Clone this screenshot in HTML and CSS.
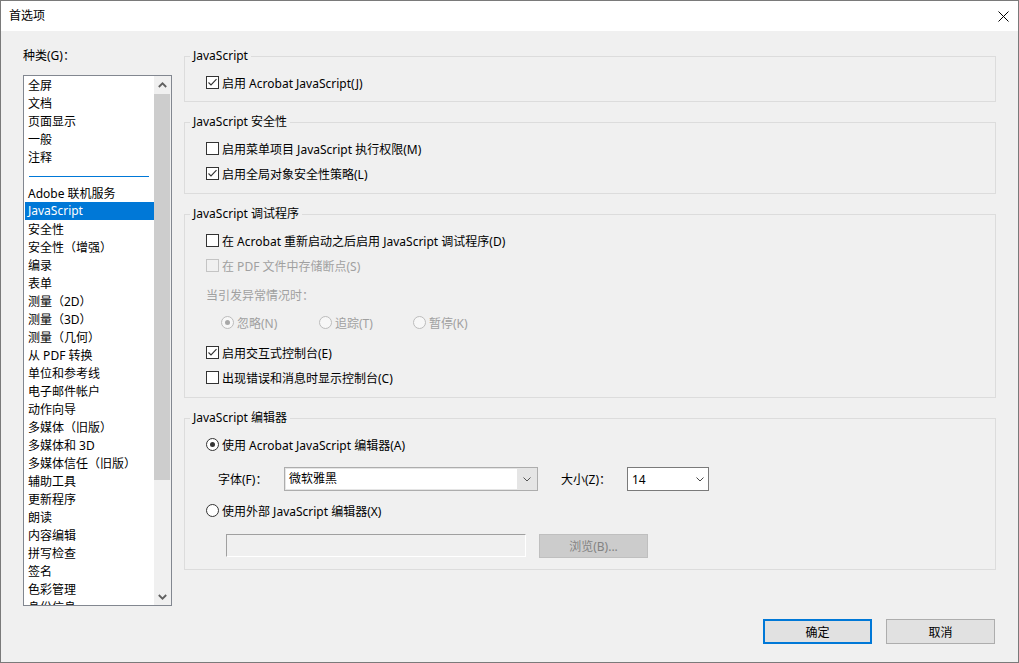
FILE: index.html
```html
<!DOCTYPE html>
<html lang="zh-CN">
<head>
<meta charset="utf-8">
<title>首选项</title>
<link rel="stylesheet" href="styles.css">
</head>
<body>
<div class="window">
  <div class="titlebar">
    <span class="title">首选项</span>
    <span class="close"><svg width="11" height="11" viewBox="0 0 11 11"><path d="M0.5 0.5 L10.5 10.5 M10.5 0.5 L0.5 10.5" stroke="#000" stroke-width="1" fill="none"/></svg></span>
  </div>
  <div class="body">
    <div class="content">
      <div class="left">
        <div class="cat-label">种类(G)：</div>
        <div class="listbox">
          <ul class="items">
            <li>全屏</li>
            <li>文档</li>
            <li>页面显示</li>
            <li>一般</li>
            <li>注释</li>
            <li class="sep"><span class="sep-line"></span></li>
            <li>Adobe 联机服务</li>
            <li class="sel">JavaScript</li>
            <li>安全性</li>
            <li>安全性（增强）</li>
            <li>编录</li>
            <li>表单</li>
            <li>测量（2D）</li>
            <li>测量（3D）</li>
            <li>测量（几何）</li>
            <li>从 PDF 转换</li>
            <li>单位和参考线</li>
            <li>电子邮件帐户</li>
            <li>动作向导</li>
            <li>多媒体（旧版）</li>
            <li>多媒体和 3D</li>
            <li>多媒体信任（旧版）</li>
            <li>辅助工具</li>
            <li>更新程序</li>
            <li>朗读</li>
            <li>内容编辑</li>
            <li>拼写检查</li>
            <li>签名</li>
            <li>色彩管理</li>
            <li>身份信息</li>
          </ul>
          <div class="scrollbar">
            <div class="sb-btn"><svg width="9" height="6" viewBox="0 0 9 6"><polyline points="0.8,5 4.5,1.3 8.2,5" fill="none" stroke="#606060" stroke-width="1.8"/></svg></div>
            <div class="sb-track"><div class="sb-thumb"></div></div>
            <div class="sb-btn"><svg width="9" height="6" viewBox="0 0 9 6"><polyline points="0.8,1 4.5,4.7 8.2,1" fill="none" stroke="#606060" stroke-width="1.8"/></svg></div>
          </div>
        </div>
      </div>

      <div class="right">
        <fieldset class="group">
          <legend>JavaScript</legend>
          <div class="gbody">
            <div class="row"><span class="cb"><svg width="11" height="11" viewBox="0 0 11 11"><polyline points="1.5,5.5 4,8 9.5,2.2" fill="none" stroke="#333" stroke-width="1.1"/></svg></span>启用 Acrobat JavaScript(J)</div>
          </div>
        </fieldset>

        <fieldset class="group">
          <legend>JavaScript 安全性</legend>
          <div class="gbody">
            <div class="row"><span class="cb"></span>启用菜单项目 JavaScript 执行权限(M)</div>
            <div class="row"><span class="cb"><svg width="11" height="11" viewBox="0 0 11 11"><polyline points="1.5,5.5 4,8 9.5,2.2" fill="none" stroke="#333" stroke-width="1.1"/></svg></span>启用全局对象安全性策略(L)</div>
          </div>
        </fieldset>

        <fieldset class="group">
          <legend>JavaScript 调试程序</legend>
          <div class="gbody gbody-debug">
            <div class="row"><span class="cb"></span>在 Acrobat 重新启动之后启用 JavaScript 调试程序(D)</div>
            <div class="row dis-text"><span class="cb cb-dis"></span>在 PDF 文件中存储断点(S)</div>
            <div class="row dis-text exc-label">当引发异常情况时：</div>
            <div class="row radios dis-text">
              <span class="radio-item ri-1"><span class="rd rd-dis rd-on"></span>忽略(N)</span>
              <span class="radio-item ri-2"><span class="rd rd-dis"></span>追踪(T)</span>
              <span class="radio-item"><span class="rd rd-dis"></span>暂停(K)</span>
            </div>
            <div class="row after-radios"><span class="cb"><svg width="11" height="11" viewBox="0 0 11 11"><polyline points="1.5,5.5 4,8 9.5,2.2" fill="none" stroke="#333" stroke-width="1.1"/></svg></span>启用交互式控制台(E)</div>
            <div class="row"><span class="cb"></span>出现错误和消息时显示控制台(C)</div>
          </div>
        </fieldset>

        <fieldset class="group">
          <legend>JavaScript 编辑器</legend>
          <div class="gbody gbody-editor">
            <div class="row"><span class="rd rd-on"></span>使用 Acrobat JavaScript 编辑器(A)</div>
            <div class="fontrow">
              <span class="flabel">字体(F)：</span>
              <span class="combo">
                <span class="combo-val">微软雅黑</span>
                <span class="combo-arrow"><svg width="8" height="5" viewBox="0 0 8 5"><polyline points="0.5,0.5 4,4 7.5,0.5" fill="none" stroke="#555" stroke-width="1"/></svg></span>
              </span>
              <span class="flabel">大小(Z)：</span>
              <span class="combo2">
                <span>14</span>
                <svg width="8" height="5" viewBox="0 0 8 5"><polyline points="0.5,0.5 4,4 7.5,0.5" fill="none" stroke="#444" stroke-width="1"/></svg>
              </span>
            </div>
            <div class="row ext-row"><span class="rd"></span>使用外部 JavaScript 编辑器(X)</div>
            <div class="fieldrow">
              <span class="tfield"></span>
              <span class="browse">浏览(B)...</span>
            </div>
          </div>
        </fieldset>
      </div>
    </div>

    <div class="footer">
      <span class="btn btn-primary">确定</span>
      <span class="btn">取消</span>
    </div>
  </div>
</div>
</body>
</html>
```

FILE: styles.css
```css
* { box-sizing: border-box; }
html, body { margin: 0; padding: 0; }
body {
  font-family: "Noto Sans", "Noto Sans CJK SC", sans-serif;
  font-size: 12px;
  color: #000;
  background: #fff;
}
.window {
  width: 1019px;
  height: 663px;
  border: 1px solid #7a7a7a;
  display: flex;
  flex-direction: column;
  background: #f0f0f0;
}
.titlebar {
  height: 30px;
  flex: none;
  background: #fff;
  display: flex;
  align-items: center;
  justify-content: space-between;
  padding: 0 9px 0 8px;
}
.title { line-height: 30px; }
.close svg { display: block; }

.body {
  flex: 1;
  display: flex;
  flex-direction: column;
}
.content {
  display: flex;
  padding: 15px 0 0 22px;
}
.left { width: 149px; flex: none; }
.cat-label { height: 18px; line-height: 19px; }
.listbox {
  margin-top: 11px;
  height: 531px;
  border: 1px solid #828790;
  background: #fff;
  display: flex;
  overflow: hidden;
}
.items {
  list-style: none;
  margin: 0;
  padding: 0;
  flex: 1;
  overflow: hidden;
}
.items li {
  height: 18px;
  line-height: 20px;
  margin-left: 1px;
  padding-left: 3px;
  white-space: nowrap;
}
.items li.sel { background: #0078d7; color: #fff; line-height: 18px; }
.items li.sep { padding: 10px 5px 0 4px; }
.sep-line { display: block; border-top: 1px solid #0078d7; }

.scrollbar {
  width: 17px;
  flex: none;
  display: flex;
  flex-direction: column;
  background: #f0f0f0;
}
.sb-btn {
  height: 17px;
  flex: none;
  display: flex;
  align-items: center;
  justify-content: center;
}
.sb-btn svg { display: block; }
.sb-track { flex: 1; padding-top: 1px; }
.sb-thumb { height: 386px; background: #cdcdcd; margin-right: 1px; }

.right { margin-left: 12px; width: 812px; margin-top: 2px; }
.group {
  margin: 0;
  padding: 0;
  border: 1px solid #dcdcdc;
  min-width: 0;
}
.group + .group { margin-top: 12px; }
.group legend {
  margin-left: 5px;
  padding: 0 3px;
  height: 16px;
  line-height: 16px;
}
.gbody { padding: 6px 0 6px 21px; }
.gbody-debug { padding-bottom: 7px; }
.gbody-editor { padding-bottom: 11px; }
.group:nth-child(2) .gbody { padding-bottom: 7px; }

.row {
  height: 25px;
  display: flex;
  align-items: center;
  white-space: nowrap;
}
.cb {
  width: 13px;
  height: 13px;
  flex: none;
  border: 1px solid #333;
  background: #fff;
  margin-right: 3px;
}
.cb svg { display: block; }
.cb-dis { border-color: #c4c4c4; background: #f0f0f0; }
.dis-text { color: #a0a0a0; }
.exc-label { margin-top: 4px; }
.radios { margin-top: 3px; padding-left: 15px; }
.radio-item { display: flex; align-items: center; }
.ri-1 { width: 98px; }
.ri-2 { width: 94px; }
.after-radios { margin-top: 5px; }

.rd {
  width: 13px;
  height: 13px;
  flex: none;
  border: 1px solid #333;
  border-radius: 50%;
  background: #fff;
  margin-right: 3px;
  display: flex;
  align-items: center;
  justify-content: center;
}
.rd-on::after {
  content: "";
  width: 5px;
  height: 5px;
  border-radius: 50%;
  background: #333;
}
.rd-dis { border-color: #bcbcbc; background: #f7f7f7; }
.rd-dis.rd-on::after { background: #a8a8a8; }

.fontrow {
  margin-top: 10px;
  height: 24px;
  display: flex;
  align-items: center;
  padding-left: 12px;
}
.flabel { width: 66px; flex: none; }
.combo {
  width: 254px;
  height: 24px;
  flex: none;
  border: 1px solid #adadad;
  background: #e5e5e5;
  padding: 1px;
  display: flex;
  margin-right: 23px;
}
.combo-val {
  flex: 1;
  background: #fff;
  padding-left: 3px;
  line-height: 20px;
}
.combo-arrow {
  width: 19px;
  flex: none;
  display: flex;
  align-items: center;
  justify-content: center;
}
.combo-arrow svg { display: block; }
.combo2 {
  width: 82px;
  height: 24px;
  flex: none;
  border: 1px solid #7a7a7a;
  background: #fff;
  display: flex;
  align-items: center;
  justify-content: space-between;
  padding: 0 4px 0 4px;
}
.combo2 svg { display: block; }
.ext-row { margin-top: 7px; }
.fieldrow {
  margin-top: 11px;
  display: flex;
  align-items: flex-start;
  padding-left: 20px;
}
.tfield {
  width: 300px;
  height: 23px;
  border-top: 1px solid #a0a0a0;
  border-left: 1px solid #a0a0a0;
  border-bottom: 1px solid #fff;
  border-right: 1px solid #fff;
  background: #f0f0f0;
}
.browse {
  margin-left: 13px;
  width: 109px;
  height: 24px;
  background: #cccccc;
  border: 1px solid #bfbfbf;
  color: #838383;
  display: flex;
  align-items: center;
  justify-content: center;
}

.footer {
  margin-top: auto;
  display: flex;
  justify-content: flex-end;
  gap: 14px;
  padding: 0 23px 18px 0;
}
.btn {
  width: 109px;
  height: 25px;
  background: #e1e1e1;
  border: 1px solid #adadad;
  display: flex;
  align-items: center;
  justify-content: center;
}
.btn-primary { border: 2px solid #0078d7; }
```
